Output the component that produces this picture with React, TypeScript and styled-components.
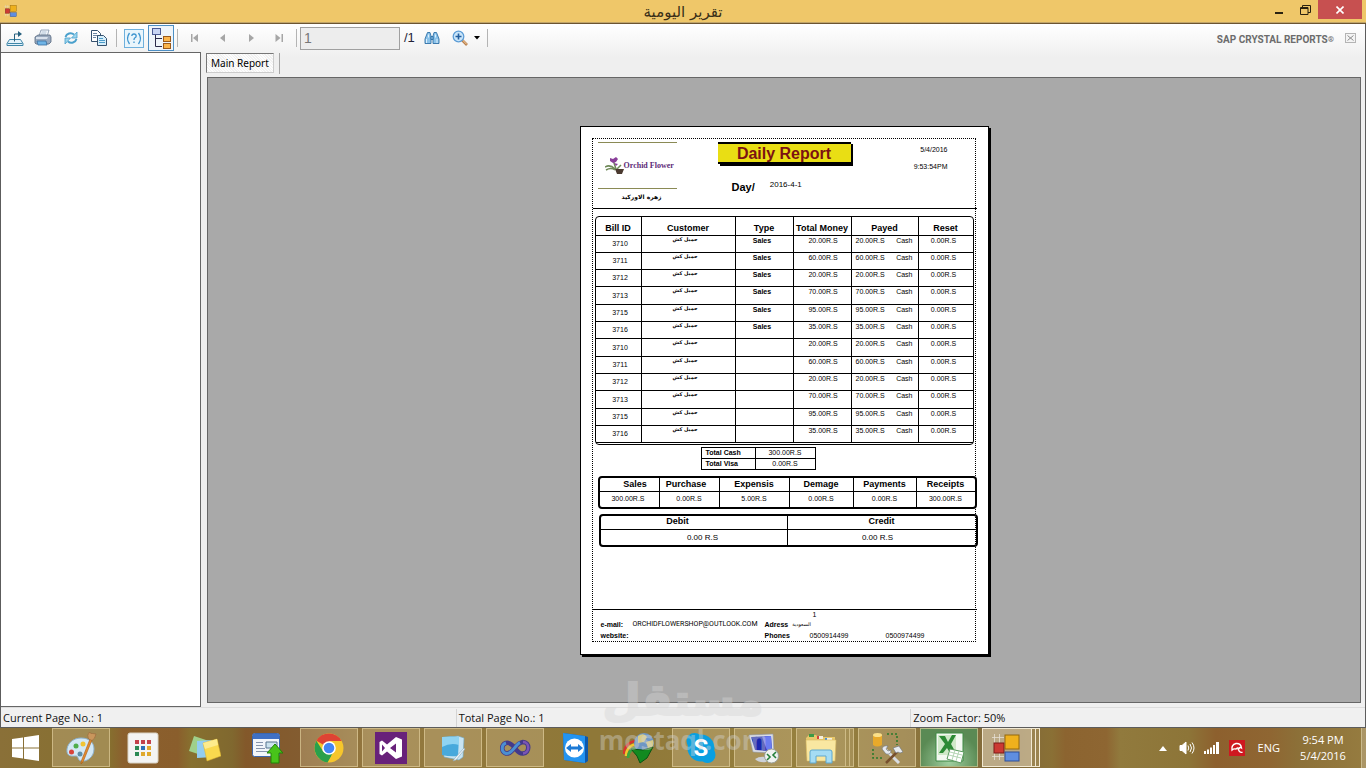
import React from 'react';
import styled, { createGlobalStyle, css } from 'styled-components';

const GlobalStyle = createGlobalStyle`
  * { box-sizing: border-box; }
  body { margin: 0; background: #f0f0f0; font-family: "Open Sans", "DejaVu Sans", sans-serif; }
  button { font: inherit; color: inherit; }
`;

const ui = '"Open Sans", "DejaVu Sans", sans-serif';
const arial = '"Liberation Sans", Arial, sans-serif';

/* ---------- window ---------- */

const Screen = styled.div`
  position: relative;
  display: flex;
  flex-direction: column;
  min-height: 100vh;
`;

const TitleBar = styled.header`
  display: flex;
  align-items: flex-start;
  height: 24px;
  padding: 0 4px;
  background: #efc769;
  border-bottom: 1px solid #6b5430;
  box-shadow: inset 0 -1px 0 #c0a468;
`;

const TitleSide = styled.div<{ $end?: boolean }>`
  flex: 1;
  display: flex;
  justify-content: ${(p) => (p.$end ? 'flex-end' : 'flex-start')};
`;

const AppIcon = styled.svg`
  width: 14px;
  height: 14px;
  margin-top: 4px;
`;

const Title = styled.h1`
  margin: 0;
  font: 400 15px/24px "DejaVu Sans", sans-serif;
  color: #3a2f18;
`;

const CaptionButton = styled.button<{ $close?: boolean }>`
  width: ${(p) => (p.$close ? 44 : 26)}px;
  height: 19px;
  padding: 0;
  border: 0;
  display: flex;
  align-items: center;
  justify-content: center;
  color: ${(p) => (p.$close ? '#fff' : '#2a2210')};
  background: ${(p) => (p.$close ? '#c75050' : 'transparent')};
`;

const WindowBody = styled.main`
  flex: 1;
  display: flex;
  flex-direction: column;
  border: solid #5c5c5c;
  border-width: 0 1px 1px 1px;
  background: linear-gradient(#fff, #efefef 34px);
`;

const Toolbar = styled.div`
  display: flex;
  align-items: center;
  height: 28px;
`;

const ToolButton = styled.button<{ $pressed?: boolean }>`
  width: ${(p) => (p.$pressed ? 26 : 28)}px;
  height: 26px;
  padding: 0;
  display: flex;
  align-items: center;
  justify-content: center;
  border: 1px solid ${(p) => (p.$pressed ? '#4d8fc4' : 'transparent')};
  background: ${(p) => (p.$pressed ? '#eef4fa' : 'transparent')};
`;

const Divider = styled.span`
  width: 1px;
  height: 18px;
  margin: 0 3px;
  background: #b4b4b4;
`;

const DropArrow = styled.svg`
  width: 7px;
  height: 4px;
  margin-right: 3px;
`;

const PageInput = styled.input`
  width: 100px;
  height: 23px;
  padding: 0 3px;
  border: 1px solid #a0a0a0;
  border-radius: 0;
  background: #ededed;
  color: #777;
  font: 14px/20px ${arial};
`;

const PageCount = styled.span`
  width: 18px;
  padding-left: 4px;
  font: 13px/20px ${arial};
  color: #222238;
`;

const Brand = styled.span`
  margin-left: auto;
  padding-top: 4px;
  font: 700 10px/14px Roboto, ${arial};
  color: #6c6c6c;
  white-space: nowrap;
`;

const Registered = styled.small`
  font-size: 8px;
  vertical-align: top;
`;

const PanelClose = styled.button`
  width: 11px;
  height: 10px;
  margin: 0 9px 0 11px;
  padding: 0;
  border: 1px solid #b4b4b4;
  background: #f4f4f4;
  display: flex;
  align-items: center;
  justify-content: center;
`;

const Workspace = styled.div`
  flex: 1;
  display: flex;
`;

const GroupTree = styled.aside`
  width: 200px;
  background: #fff;
  border: solid #666;
  border-width: 1px 1px 1px 0;
`;

const ReportArea = styled.section`
  flex: 1;
  display: flex;
  flex-direction: column;
  padding: 0 4px 4px 5px;
`;

const TabStrip = styled.div`
  display: flex;
  align-items: flex-start;
  height: 25px;
  padding-top: 1px;
`;

const Tab = styled.button`
  height: 20px;
  padding: 0 4px;
  border: 1px solid;
  border-color: #777 #ccc #ccc #777;
  background: repeating-linear-gradient(45deg, #fdfdfd 0 1px, #f1f1f1 1px 2px);
  font: 10px/16px "Noto Sans", sans-serif;
  color: #000;
`;

const TabEdge = styled.span`
  width: 1px;
  height: 21px;
  margin-left: 5px;
  background: #a5a5a5;
`;

const Viewer = styled.div`
  flex: 1;
  display: flex;
  align-items: center;
  justify-content: center;
  margin-left: 1px;
  padding: 24px;
  background: #a9a9a9;
  border: 1px solid #666;
`;

const StatusBar = styled.footer`
  display: grid;
  grid-template-columns: repeat(3, 1fr);
  height: 20px;
  padding-top: 1px;
  border-top: 1px solid #dcdcdc;
  background: #f0f0f0;
`;

const StatusCell = styled.span`
  padding-left: 2px;
  font: 11px/18px ${ui};
  color: #111;
  & + & {
    border-left: 1px solid #d4d4d4;
  }
`;

/* ---------- report paper ---------- */

const Paper = styled.article`
  width: 409px;
  height: 529px;
  padding: 11px 12px 12px 11px;
  background: #fff;
  border: 1px solid #000;
  box-shadow: 2px 2px 0 #000;
  font: 7px/9px ${arial};
  color: #000;
`;

const Margins = styled.div`
  display: flex;
  flex-direction: column;
  height: 100%;
  border: 1px dotted #000;
`;

const ReportHeader = styled.div`
  display: flex;
  align-items: flex-start;
  flex: none;
  height: 70px;
  margin-right: -2px;
  padding: 3px 29px 0 5px;
  border-bottom: 1px solid #000;
`;

const LogoBlock = styled.div`
  width: 79px;
  margin-right: 41px;
`;

const Logo = styled.div`
  display: flex;
  align-items: center;
  height: 47px;
  padding: 2px 0 0 7px;
  border: solid #8a8a55;
  border-width: 1px 0;
  font: 700 8px/10px "Liberation Serif", serif;
  color: #5d2a78;
  white-space: nowrap;
`;

const LogoCaption = styled.div`
  padding: 2px 0 0 9px;
  font: 700 6px/12px "DejaVu Sans", sans-serif;
  text-align: center;
`;

const ReportTitle = styled.h2`
  width: 133px;
  height: 22px;
  margin: 0 0 15px;
  border: solid #000;
  border-width: 2px 0;
  box-shadow: 2px 2px 0 #000;
  background: #e9de14;
  color: #7c1212;
  font: 700 16px/19px ${arial};
  text-align: center;
`;

const DayLine = styled.div`
  display: flex;
  align-items: flex-start;
  gap: 15px;
  padding-left: 14px;
  font-size: 8px;
  line-height: 12px;
`;

const DayLabel = styled.strong`
  font-size: 11px;
  line-height: 16px;
`;

const PrintStamp = styled.div`
  margin-left: auto;
  padding-top: 3px;
  display: grid;
  gap: 8px;
  text-align: right;
`;

const RoundedBox = styled.div<{ $heavy?: boolean; $left: number; $top: number }>`
  flex: none;
  width: 379px;
  margin: ${(p) => p.$top}px 0 0 ${(p) => p.$left}px;
  padding-bottom: ${(p) => (p.$heavy ? 0 : 1)}px;
  border: ${(p) => (p.$heavy ? 2 : 1)}px solid #000;
  border-radius: 4px;
`;

const Grid = styled.table`
  width: 100%;
  table-layout: fixed;
  border-collapse: separate;
  border-spacing: 0;
  text-align: center;
  white-space: nowrap;

  th, td {
    padding: 0;
    border-right: 1px solid #000;
    border-bottom: 1px solid #000;
  }
  th { font-size: 9px; line-height: 13px; }
  th:last-child, td:last-child { border-right: 0; }
`;

const BillGrid = styled(Grid)`
  thead th { height: 19px; padding-top: 5px; }
  tbody tr { height: 17px; }
  tbody tr:nth-child(3n + 4) { height: 18px; }
  tbody td { vertical-align: top; }
  tbody td:first-child { padding-left: 4px; vertical-align: middle; }
  tbody td:nth-child(3) { padding-right: 4px; }
  tbody td:nth-child(4) { padding-left: 2px; }
  tbody td:last-child { padding-right: 4px; }
`;

const SummaryGrid = styled(Grid)`
  thead th { height: 14px; }
  tbody td { height: 15px; padding-bottom: 2px; border-bottom: 0; }
`;

const PeriodGrid = styled(SummaryGrid)`
  thead th:first-child { padding-left: 12px; }
  thead th:nth-child(2) { padding-right: 6px; }
  tbody td:first-child { padding-right: 2px; }
`;

const BalanceGrid = styled(SummaryGrid)`
  th { line-height: 10px; vertical-align: top; }
  thead th:first-child { padding-right: 32px; }
  tbody td { padding: 0 8px 0 0; font-size: 8px; }
  tbody td:first-child { padding: 0 0 0 18px; }
`;

const TotalsGrid = styled(Grid)`
  flex: none;
  width: 115px;
  margin: 2px 0 0 108px;
  border: solid #000;
  border-width: 1px 1px 0;

  th, td { height: 11px; }
  th { font-size: 7px; line-height: 9px; text-align: left; padding-left: 4px; }
`;

const Customer = styled.span`
  display: block;
  padding-right: 6px;
  font: 700 5px/7px "DejaVu Sans", sans-serif;
`;

const Payment = styled.span`
  display: flex;
  justify-content: space-between;
  padding: 0 5px 0 4px;
`;

const ReportFooter = styled.div`
  display: grid;
  grid-template-columns: 164px 1fr;
  grid-template-rows: 9px auto;
  flex: none;
  height: 32px;
  margin: auto -2px 0 0;
  padding-left: 8px;
  border-top: 1px solid #000;
  white-space: nowrap;
`;

const PageNumber = styled.span`
  grid-column: 2;
  padding-left: 48px;
`;

const ContactLine = styled.div`
  display: flex;
  gap: 4px;
  line-height: 11px;
`;

const PhoneLine = styled.div`
  display: grid;
  grid-template-columns: 45px 76px 1fr;
  line-height: 11px;
`;

const EmailLabel = styled.strong`
  width: 28px;
`;

const Email = styled.span`
  font-family: Roboto, sans-serif;
`;

const ArabicText = styled.span`
  font-family: "DejaVu Sans", sans-serif;
  font-size: 5px;
`;

/* ---------- watermark ---------- */

const Watermark = styled.div`
  position: absolute;
  left: 50%;
  bottom: 14px;
  width: 172px;
  margin-left: -86px;
  z-index: 2;
  pointer-events: none;
  color: #d4d4d4;
  opacity: 0.4;
  text-align: center;
`;

const WatermarkArabic = styled.div`
  font: 700 44px/52px "DejaVu Sans", sans-serif;
  -webkit-text-stroke: 2px #d4d4d4;
  white-space: nowrap;
`;

const WatermarkLatin = styled.div`
  font: 700 26px/28px "Open Sans", sans-serif;
`;

/* ---------- taskbar ---------- */

const Taskbar = styled.nav`
  display: flex;
  align-items: stretch;
  height: 40px;
  background: linear-gradient(
    90deg,
    #8a7038 0, #86702f 8%, #8b602e 9%, #8a5e2c 13%, #87702f 14%, #80682f 17%,
    #83582a 18%, #835c30 22%, #93783f 27%, #8f7838 42%, #8f7838 45%, #97813f 60%,
    #80683a 74%, #8a7035 77%, #8c6430 78%, #8e6632 81%, #917a3d 82%, #8d7538 87%,
    #8d602e 89%, #8f6632 93%, #8c7038 95%, #967c40 100%
  );
`;

const StartButton = styled.button`
  width: 50px;
  margin-right: 2px;
  padding: 0;
  border: 0;
  background: none;
  display: flex;
  align-items: center;
  justify-content: center;
`;

const raised = css`
  border: 1px solid rgba(232, 214, 164, 0.6);
  background: rgba(205, 185, 140, 0.38);
`;

type Look = 'plain' | 'open' | 'green' | 'active';

const Task = styled.button<{ $look: Look; $stacked?: boolean }>`
  width: ${(p) => (p.$stacked ? 50 : 58)}px;
  height: 39px;
  margin-right: ${(p) => (p.$stacked ? 0 : 4)}px;
  padding: 0;
  border: 1px solid transparent;
  background: none;
  display: flex;
  align-items: center;
  justify-content: center;
  ${(p) => p.$look !== 'plain' && raised}
  ${(p) => p.$look === 'green' && css`background: radial-gradient(circle at 50% 90%, #9fcf9f, #5a8a54 70%);`}
  ${(p) => p.$look === 'active' && css`background: rgba(225, 212, 185, 0.6); border-color: #f2e9d2;`}
`;

const StackEdge = styled.span<{ $bright?: boolean }>`
  width: 4px;
  height: 39px;
  border: solid ${(p) => (p.$bright ? '#f2e9d2' : 'rgba(232, 214, 164, 0.6)')};
  border-width: 1px 1px 1px 0;
  background: rgba(205, 185, 140, 0.3);
  & + button { margin-left: 4px; }
`;

const Tray = styled.div`
  display: flex;
  align-items: center;
  gap: 9px;
  margin-left: auto;
  color: #fff;
  font: 11px/16px ${ui};
`;

const TrayButton = styled.button`
  padding: 0;
  border: 0;
  background: none;
  display: flex;
  &:first-child { margin-right: 3px; }
`;

const Language = styled.span`
  margin-left: 4px;
`;

const Clock = styled.time`
  width: 76px;
  margin-left: -4px;
  text-align: center;
`;

const ShowDesktop = styled.button`
  width: 5px;
  margin-left: -9px;
  align-self: stretch;
  height: 40px;
  padding: 0;
  border: 0;
  border-left: 1px solid #c9b98c;
  background: rgba(255, 255, 255, 0.2);
`;

/* ---------- toolbar drawings ---------- */

const ExportIcon = () => (
  <svg width="18" height="18" viewBox="0 0 18 18" fill="none" stroke="#3f86a8">
    <path d="M3.500 10.500h11l2.500 4v2h-16v-2z" fill="#e4f2fa" />
    <path d="M1.500 14.500h15" />
    <path d="M8.500 12.500V5h4" stroke="#27607e" />
    <path d="M12 2l4 3-4 3z" fill="#27607e" stroke="none" />
  </svg>
);

const PrintIcon = () => (
  <svg width="18" height="18" viewBox="0 0 18 18">
    <path d="M5 7l2-6h8l-2 7z" fill="#f4f8fc" stroke="#8092a8" strokeWidth=".8" />
    <path d="M7.500 3h5M7 5h5" stroke="#9fb4cc" strokeWidth=".8" />
    <path d="M1 8l3-2h12l1 2v5l-2 2H2l-1-1z" fill="#9aaabf" stroke="#56677f" strokeWidth=".8" />
    <path d="M2 8h12l-1 2H2z" fill="#d8e1ec" />
    <path d="M3 12h9l1 4H4z" fill="#6fb4e6" stroke="#3a6fa0" strokeWidth=".8" />
  </svg>
);

const RefreshIcon = () => (
  <svg width="16" height="16" viewBox="0 0 16 16" fill="none" stroke="#4aa0cc" strokeWidth="2">
    <path d="M2.500 7C3.500 3.500 8 2 11 4.500" />
    <path d="M13.500 9C12.500 12.500 8 14 5 11.500" />
    <path d="M14 2v6H8.500z M2 14V8h5.500z" fill="#9ad6ee" stroke="#4aa0cc" strokeWidth=".8" />
  </svg>
);

const CopyIcon = () => (
  <svg width="18" height="18" viewBox="0 0 18 18" stroke="#35516e">
    <path d="M1.500 1.500h6l3 3v8h-9z" fill="#fff" />
    <path d="M3 4.500h4M3 6.500h5M3 8.500h3" stroke="#6d87a3" />
    <path d="M7.500 6.500h6l3 3v7h-9z" fill="#d6eefa" />
    <path d="M9 9.500h4M9 11.500h6M9 13.500h6" stroke="#4c9bc9" />
  </svg>
);

const HelpIcon = () => (
  <svg width="20" height="19" viewBox="0 0 20 19">
    <rect x=".5" y=".5" width="19" height="18" fill="#e9f5fc" stroke="#6fb0dc" />
    <g fill="none" stroke="#3d94cf" strokeWidth="1.300">
      <path d="M5.500 4Q1.500 9.500 5.500 15M14.500 4q4 5.500 0 11" />
      <path d="M7.800 7q.2-2 2.200-2t2.200 2q0 1.300-1.500 2-.7.500-.7 2M10 12.500V14" />
    </g>
  </svg>
);

const TreeIcon = () => (
  <svg width="22" height="23" viewBox="0 0 22 23">
    <path d="M5.500 8v11.500H12M5.500 11.500H12" fill="none" stroke="#2a2a4a" />
    <rect x="2.500" y="1.500" width="8" height="6" fill="#c7d4f4" stroke="#4a5a94" />
    <rect x="13.500" y="9.500" width="7" height="5" fill="#fbb54c" stroke="#9a5a1c" />
    <rect x="13.500" y="16.500" width="7" height="5" fill="#fbb54c" stroke="#9a5a1c" />
  </svg>
);

const NavIcon = ({ d }: { d: string }) => (
  <svg width="10" height="10" viewBox="0 0 10 10" fill="#a6a6a6"><path d={d} /></svg>
);

const FindIcon = () => (
  <svg width="16" height="14" viewBox="0 0 16 14" fill="#8cc3ea" stroke="#2f6fa6" strokeWidth=".9">
    <path d="M3.500 1.500h2.500l1 3.500v7.500H1V8z" />
    <path d="M12.500 1.500H10L9 5v7.500h6V8z" />
    <path d="M7 5.500h2v3H7z" />
    <path d="M2.500 8v4M13 8v4M4.500 3.500v3M11.500 3.500v3" stroke="#e6f5ff" />
  </svg>
);

const ZoomIcon = () => (
  <svg width="16" height="16" viewBox="0 0 16 16" fill="none">
    <path d="M10 10l5 5" stroke="#b9814f" strokeWidth="2.600" />
    <path d="M10.500 10l4.200 4.300" stroke="#f7d0a0" />
    <circle cx="6.500" cy="6.500" r="5.300" fill="#cbe6fa" stroke="#5d9dd6" strokeWidth="1.300" />
    <path d="M3.500 6.500h6M6.500 3.500v6" stroke="#245f9e" strokeWidth="1.600" />
  </svg>
);

/* ---------- taskbar drawings ---------- */

const Ico = ({ children }: { children: React.ReactNode }) => (
  <svg width="32" height="32" viewBox="0 0 32 32" aria-hidden="true">{children}</svg>
);

const WindowsIcon = () => (
  <svg width="27" height="26" viewBox="0 0 27 26" fill="#fff">
    <path d="M0 4l11-1.600V12.500H0zM12 2.200L27 0v12.500H12zM0 13.500h11v10.100L0 22zM12 13.500h15V26l-15-2.200z" />
  </svg>
);

const PaintIcon = () => (
  <Ico>
    <path d="M2 20C1 12 8 6 16 6c9 0 13 5 13 11 0 8-7 13-13 12-4-1-2-5-5-5-3 0-8 1-9-4z" fill="#d3e8f5" stroke="#8db2cf" />
    <circle cx="6.500" cy="20" r="2.500" fill="#d8433b" /><circle cx="11" cy="14" r="2.500" fill="#4fae4c" />
    <circle cx="18" cy="12" r="2.500" fill="#f1c433" /><circle cx="15" cy="22" r="2.500" fill="#5f8ea6" />
    <path d="M27 8L18 30l-2 2 .5-3.500L25 7z" fill="#e58a2c" stroke="#a65c18" strokeWidth=".6" />
    <path d="M23.500 7q-2-4 1-7 1 2 3 1.500L31 2q-1 5-4 6.500z" fill="#c9965c" stroke="#97673a" strokeWidth=".6" />
  </Ico>
);

const dots = ['#c2414b', '#c2414b', '#c2414b', '#2c8a55', '#2c6fb8', '#e0a92e', '#2c8a55', '#e0a92e', '#e0a92e'];
const AppsIcon = () => (
  <Ico>
    <rect x="1" y="1" width="30" height="30" rx="2" fill="#f4f4f4" stroke="#d9d2c4" />
    {dots.map((c, i) => (
      <rect key={i} x={8 + (i % 3) * 6} y={8 + Math.floor(i / 3) * 6} width="4" height="4" fill={c} />
    ))}
  </Ico>
);

const NotesIcon = () => (
  <Ico>
    <path d="M5 4l15 5-5 15L0 19z" fill="#9fd08a" />
    <path d="M8 9l15-1 1 17-16 1z" fill="#93cdf0" />
    <path d="M14 11l14-4 4 17-14 5z" fill="#f9d94e" stroke="#d9b12e" strokeWidth=".5" />
    <path d="M14 11l14-4 1 6-13 4z" fill="#fdeb8c" />
  </Ico>
);

const UploadIcon = () => (
  <Ico>
    <rect x="1.500" y="1.500" width="27" height="23" rx="2" fill="#f3f6fa" stroke="#3c66ad" />
    <path d="M2 2h26v5H2z" fill="#3f70c4" />
    <path d="M5 10.500h7M5 13.500h7M5 16.500h9M5 19.500h12" stroke="#8795ad" />
    <path d="M15 10h11v6H15z" fill="#cde3ee" stroke="#56758e" />
    <path d="M24 12l8 9h-4v10h-8V21h-4z" fill="#48c41a" stroke="#238208" />
  </Ico>
);

const ChromeIcon = () => (
  <Ico>
    <circle cx="16" cy="16" r="14.500" fill="#f6c62c" />
    <path d="M16 16L3.400 8.800A14.500 14.500 0 0 1 28.600 9z" fill="#de4334" />
    <path d="M3.400 8.800L10.500 20 16 16l4 5-5.500 9.400A14.500 14.500 0 0 1 3.400 8.800z" fill="#2aa04c" />
    <path d="M16 9h12.600L22 20l-6 10 4-10z" fill="#f6c62c" />
    <circle cx="16" cy="16" r="6.800" fill="#fff" /><circle cx="16" cy="16" r="5.300" fill="#4285f4" />
  </Ico>
);

const VisualStudioIcon = () => (
  <Ico>
    <path d="M0 0h32v32H0z" fill="#68217a" />
    <path fillRule="evenodd" d="M21 5l6 2.500v17L21 27l-9-7.500L7 23.500 4.500 22V10L7 8.500l5 4zM21 11.500L15 16l6 4.500zM7 12.500v7l3-3.500z" fill="#fff" />
  </Ico>
);

const NotebookIcon = () => (
  <Ico>
    <path d="M6 6l15-2 6 2-1 19-4 3-15-3z" fill="#c8e4f3" stroke="#6fa9c8" strokeWidth=".6" />
    <path d="M5 5q8-1 17 0l-1 19q-8 1-16-1z" fill="#48a9dc" />
    <path d="M5 5q8-1 17 0v8q-8-3-17 2z" fill="#8fd3f2" />
    <path d="M28 17l-9 11-3 1 2-3 9-10z" fill="#eef6fa" stroke="#8aa4b4" strokeWidth=".6" />
  </Ico>
);

const InfinityIcon = () => (
  <Ico>
    <path d="M16 16C12 11 9 10.500 7 11c-5 1.500-5 9 0 10.500 7 1 9-10.500 17-11.500 7 0 7 11 0 11.500-4 .5-6-3-8-5.500z" fill="none" stroke="#443a8a" strokeWidth="4.500" />
    <path d="M7 11c-5 1.500-5 9 0 10.500 6 1 9-8.500 14-10.800" fill="none" stroke="#4b8fd1" strokeWidth="3" />
    <path d="M24 10c7 0 7 11 0 11.500" fill="none" stroke="#7b55b5" strokeWidth="2.500" />
  </Ico>
);

const TeamViewerIcon = () => (
  <Ico>
    <path d="M2 1l22 3 3 1v24l-3 2-21-3z" fill="#0d58ac" /><path d="M2 1l22 3v27L3 28z" fill="#2494f0" />
    <circle cx="13.500" cy="16" r="9.500" fill="#fff" />
    <path d="M5 16l5-4v2.500h7V12l5 4-5 4v-2.500h-7V20z" fill="#1c7ad6" />
  </Ico>
);

const DownloadIcon = () => (
  <Ico>
    <g fill="none" strokeWidth="2.500">
      <path d="M1 22C1 14 7 9 14 9" stroke="#d8342c" /><path d="M3 24c0-7 5-12 12-12" stroke="#f1c52e" />
      <path d="M5 26c0-6 4-10 11-11" stroke="#3ba53f" />
    </g>
    <circle cx="21" cy="11" r="10" fill="#6f97c4" />
    <path d="M15 4q6-4 9 1l-3 5-6 1zM23 10l7-2q2 6-4 11z" fill="#d8cc86" />
    <path d="M8 17l12 1 10-3-6 11-7 5-3-7z" fill="#128a20" stroke="#0a5414" />
  </Ico>
);

const SkypeLetter = styled.span`
  position: absolute;
  inset: 0;
  font: 700 24px/32px Roboto, sans-serif;
  color: #fff;
  text-align: center;
`;
const SkypeBadge = styled.span`
  position: relative;
  display: flex;
`;
const SkypeIcon = () => (
  <SkypeBadge>
    <Ico>
      <circle cx="16" cy="16" r="13.500" fill="#0a9fe0" /><circle cx="9.500" cy="9" r="8" fill="#0a9fe0" />
      <circle cx="22.500" cy="23" r="8" fill="#0a9fe0" />
    </Ico>
    <SkypeLetter>S</SkypeLetter>
  </SkypeBadge>
);

const RemoteIcon = () => (
  <Ico>
    <path d="M2 3l24-1 1 19L6 20z" fill="#dcdfe6" stroke="#8f97a8" strokeWidth=".6" />
    <path d="M4 5l20-1 1 15-17-1z" fill="#1926b0" /><path d="M15 4.500L24 4l1 15-5-.3z" fill="#6b7cf0" />
    <path d="M8 27q6-4 14-1l-3 4q-7 1-11-3z" fill="#cdd1d8" />
    <circle cx="24.500" cy="24" r="7" fill="#f0f2f0" stroke="#9aa09a" />
    <path d="M20 22l3 3-3 3M29 20l-3 3 3 3" fill="none" stroke="#25803a" strokeWidth="1.600" />
  </Ico>
);

const FolderIcon = () => (
  <Ico>
    <path d="M1 6l3-3h7l2 2h17v22H2z" fill="#e8c86b" />
    <path d="M4 2h5v3H4z" fill="#3c9a46" /><path d="M12 4h6v3h-6z" fill="#f4efe0" /><path d="M12 4h2v3h-2z" fill="#d8453a" />
    <path d="M20 6h7v3h-7z" fill="#f4efe0" /><path d="M20 6h2v3h-2z" fill="#4a8dd0" />
    <path d="M1 8h30l-1 21H2z" fill="#f9e7a1" stroke="#d8b962" strokeWidth=".6" />
    <path d="M5 31V20q0-2 2-2h18q2 0 2 2v11h-6v-7H11v7z" fill="#a5dcf4" stroke="#5ea8cf" />
  </Ico>
);

const ToolsIcon = () => (
  <Ico>
    <path d="M2 3v10q4 3 9 0V3z" fill="#e8a92a" /><ellipse cx="6.500" cy="3" rx="4.500" ry="2" fill="#fbe089" />
    <path d="M16 2h10v11M2 17v9h9" fill="none" stroke="#2c7a2c" strokeWidth="1.600" strokeDasharray="2 2" />
    <path d="M14 17l14 14" stroke="#d9dde2" strokeWidth="3" /><path d="M26 20L15 31" stroke="#77502e" strokeWidth="2.500" />
    <path d="M11 17q1-4 6-3l-2 3 2 2 3-1q0 5-5 4zM22 16l6-2 4 6-3 1-2-1-2 1z" fill="#e7eaee" stroke="#68707a" strokeWidth=".6" />
  </Ico>
);

const ExcelIcon = () => (
  <Ico>
    <path d="M3 1h27v28H3z" fill="#f3f8f1" stroke="#3f8a45" />
    <path d="M5 3h18v20H5z" fill="#cfe8c8" />
    <path d="M6 4h6l3 6 4-7h4l-5 9 5 9h-6l-3-5-4 5H6l6-9z" fill="#2c8a35" />
    <path d="M17 17l14 3-3 11-14-4z" fill="#fff" stroke="#5a9a5e" />
    <path d="M17 20l12 3M16 23l12 3M22 18l-3 10M26 19l-3 10" stroke="#a3cba3" strokeWidth=".8" />
  </Ico>
);

const FormsShapes = () => (
  <>
    <path d="M3.500 2v26M8.500 2v26M1 5.500h12M1 24.500h12" stroke="#e6e0d4" strokeWidth=".8" />
    <rect x="3" y="11" width="10" height="10" fill="#cc3a33" stroke="#7c1a18" />
    <rect x="14" y="3" width="14" height="14" fill="#efb11d" stroke="#94680c" />
    <rect x="14" y="20" width="14" height="9" fill="#5f8ee0" stroke="#2f4f96" />
  </>
);
const FormsIcon = () => <Ico><FormsShapes /></Ico>;

/* ---------- data ---------- */

const bills: [string, string][] = [
  ['3710', '20.00R.S'], ['3711', '60.00R.S'], ['3712', '20.00R.S'],
  ['3713', '70.00R.S'], ['3715', '95.00R.S'], ['3716', '35.00R.S'],
];
const rows = [...bills.map((b) => [...b, 'Sales']), ...bills.map((b) => [...b, ''])];

const summary = [
  ['Sales', '300.00R.S'], ['Purchase', '0.00R.S'], ['Expensis', '5.00R.S'],
  ['Demage', '0.00R.S'], ['Payments', '0.00R.S'], ['Receipts', '300.00R.S'],
];

const tasks: { name: string; icon: React.ReactNode; look: Look; stacked?: boolean }[] = [
  { name: 'Paint', icon: <PaintIcon />, look: 'open' },
  { name: 'App launcher', icon: <AppsIcon />, look: 'plain' },
  { name: 'Sticky Notes', icon: <NotesIcon />, look: 'plain' },
  { name: 'Uploader', icon: <UploadIcon />, look: 'plain' },
  { name: 'Chrome', icon: <ChromeIcon />, look: 'open' },
  { name: 'Visual Studio', icon: <VisualStudioIcon />, look: 'open' },
  { name: 'Notebook', icon: <NotebookIcon />, look: 'open' },
  { name: 'Visual Studio 2010', icon: <InfinityIcon />, look: 'open' },
  { name: 'TeamViewer', icon: <TeamViewerIcon />, look: 'plain' },
  { name: 'Download Manager', icon: <DownloadIcon />, look: 'plain' },
  { name: 'Skype', icon: <SkypeIcon />, look: 'open' },
  { name: 'Remote Desktop', icon: <RemoteIcon />, look: 'open' },
  { name: 'File Explorer', icon: <FolderIcon />, look: 'open', stacked: true },
  { name: 'SQL tools', icon: <ToolsIcon />, look: 'open' },
  { name: 'Excel', icon: <ExcelIcon />, look: 'green' },
  { name: 'Report viewer', icon: <FormsIcon />, look: 'active', stacked: true },
];

const Cols = ({ widths }: { widths: number[] }) => (
  <colgroup>{widths.map((w, i) => <col key={i} width={w} />)}</colgroup>
);

function Report() {
  return (
    <Paper>
      <Margins>
        <ReportHeader>
          <LogoBlock>
            <Logo>
              <svg width="19" height="18" viewBox="0 0 19 18">
                <path d="M0 10q5-3 10 2M1 13q5-3 9 0M11 12L8 3M12 12l4-4" fill="none" stroke="#6f8a58" strokeWidth="1.500" />
                <path d="M5 1l3 1 3-2 2 2-2 3-3 1-3-2zM9 6l4 1-2 2z" fill="#8a3f9a" />
                <path d="M10 12h9l-2 5h-5z" fill="#4b3a30" />
              </svg>
              Orchid Flower
            </Logo>
            <LogoCaption dir="rtl">زهرة الاوركيد</LogoCaption>
          </LogoBlock>
          <div>
            <ReportTitle>Daily Report</ReportTitle>
            <DayLine><DayLabel>Day/</DayLabel><span>2016-4-1</span></DayLine>
          </div>
          <PrintStamp><span>5/4/2016</span><span>9:53:54PM</span></PrintStamp>
        </ReportHeader>

        <RoundedBox $left={2} $top={7}>
          <BillGrid>
            <Cols widths={[46, 94, 58, 58, 67, 54]} />
            <thead>
              <tr><th>Bill ID</th><th>Customer</th><th>Type</th><th>Total Money</th><th>Payed</th><th>Reset</th></tr>
            </thead>
            <tbody>
              {rows.map(([id, money, type], i) => (
                <tr key={i}>
                  <td>{id}</td>
                  <td><Customer dir="rtl">حميل كش</Customer></td>
                  <td><strong>{type}</strong></td>
                  <td>{money}</td>
                  <td><Payment><span>{money}</span><span>Cash</span></Payment></td>
                  <td>0.00R.S</td>
                </tr>
              ))}
            </tbody>
          </BillGrid>
        </RoundedBox>

        <TotalsGrid>
          <Cols widths={[54, 59]} />
          <tbody>
            <tr><th>Total Cash</th><td>300.00R.S</td></tr>
            <tr><th>Total Visa</th><td>0.00R.S</td></tr>
          </tbody>
        </TotalsGrid>

        <RoundedBox $heavy $left={5} $top={6}>
          <PeriodGrid>
            <Cols widths={[60, 60, 70, 64, 63, 58]} />
            <thead><tr>{summary.map(([h]) => <th key={h}>{h}</th>)}</tr></thead>
            <tbody><tr>{summary.map(([h, v]) => <td key={h}>{v}</td>)}</tr></tbody>
          </PeriodGrid>
        </RoundedBox>

        <RoundedBox $heavy $left={6} $top={5}>
          <BalanceGrid>
            <Cols widths={[187, 188]} />
            <thead><tr><th>Debit</th><th>Credit</th></tr></thead>
            <tbody><tr><td>0.00 R.S</td><td>0.00 R.S</td></tr></tbody>
          </BalanceGrid>
        </RoundedBox>

        <ReportFooter>
          <PageNumber>1</PageNumber>
          <ContactLine>
            <EmailLabel>e-mail:</EmailLabel><Email>ORCHIDFLOWERSHOP@OUTLOOK.COM</Email>
          </ContactLine>
          <ContactLine>
            <strong>Adress</strong><ArabicText dir="rtl">السعودية</ArabicText>
          </ContactLine>
          <ContactLine><strong>website:</strong></ContactLine>
          <PhoneLine>
            <strong>Phones</strong><span>0500914499</span><span>0500974499</span>
          </PhoneLine>
        </ReportFooter>
      </Margins>
    </Paper>
  );
}

export default function App() {
  return (
    <Screen>
      <GlobalStyle />
      <TitleBar>
        <TitleSide>
          <AppIcon viewBox="0 0 32 32"><FormsShapes /></AppIcon>
        </TitleSide>
        <Title dir="rtl">تقرير اليومية</Title>
        <TitleSide $end>
          <CaptionButton aria-label="Minimize">
            <svg width="8" height="12" viewBox="0 0 8 12"><path d="M0 8h8v2H0z" fill="currentColor" /></svg>
          </CaptionButton>
          <CaptionButton aria-label="Restore">
            <svg width="11" height="10" viewBox="0 0 11 10" fill="none" stroke="currentColor">
              <path d="M.5 2.500h7.500v7H.5zM.5 3.500h7.500M2.500 2.500V.5h8v7H8" />
            </svg>
          </CaptionButton>
          <CaptionButton $close aria-label="Close">
            <svg width="8" height="8" viewBox="0 0 8 8" stroke="currentColor" strokeWidth="1.600"><path d="M.5.5l7 7M7.500.5l-7 7" /></svg>
          </CaptionButton>
        </TitleSide>
      </TitleBar>

      <WindowBody>
        <Toolbar>
          <ToolButton aria-label="Export"><ExportIcon /></ToolButton>
          <ToolButton aria-label="Print"><PrintIcon /></ToolButton>
          <ToolButton aria-label="Refresh"><RefreshIcon /></ToolButton>
          <ToolButton aria-label="Copy"><CopyIcon /></ToolButton>
          <Divider />
          <ToolButton aria-label="Help"><HelpIcon /></ToolButton>
          <ToolButton $pressed aria-label="Group tree"><TreeIcon /></ToolButton>
          <Divider />
          <ToolButton aria-label="First page"><NavIcon d="M1 1h1.500v8H1zM8 1v8L3 5z" /></ToolButton>
          <ToolButton aria-label="Previous page"><NavIcon d="M7 1v8L2 5z" /></ToolButton>
          <ToolButton aria-label="Next page"><NavIcon d="M3 1v8l5-4z" /></ToolButton>
          <ToolButton aria-label="Last page"><NavIcon d="M1.500 1v8l5-4zM7.500 1H9v8H7.500z" /></ToolButton>
          <Divider />
          <PageInput aria-label="Page number" defaultValue="1" disabled />
          <PageCount>/1</PageCount>
          <ToolButton aria-label="Find"><FindIcon /></ToolButton>
          <ToolButton aria-label="Zoom"><ZoomIcon /></ToolButton>
          <DropArrow viewBox="0 0 7 4"><path d="M0 0h6L3 3.500z" /></DropArrow>
          <Divider />
          <Brand>SAP CRYSTAL REPORTS<Registered>®</Registered></Brand>
          <PanelClose aria-label="Close panel">
            <svg width="7" height="6" viewBox="0 0 7 6" stroke="#8c8c8c"><path d="M.5.5l6 5M6.500.5l-6 5" /></svg>
          </PanelClose>
        </Toolbar>

        <Workspace>
          <GroupTree />
          <ReportArea>
            <TabStrip><Tab>Main Report</Tab><TabEdge /></TabStrip>
            <Viewer><Report /></Viewer>
          </ReportArea>
        </Workspace>

        <StatusBar>
          <StatusCell>Current Page No.: 1</StatusCell>
          <StatusCell>Total Page No.: 1</StatusCell>
          <StatusCell>Zoom Factor: 50%</StatusCell>
        </StatusBar>
      </WindowBody>

      <Taskbar>
        <StartButton aria-label="Start"><WindowsIcon /></StartButton>
        {tasks.map((t) => (
          <React.Fragment key={t.name}>
            <Task $look={t.look} $stacked={t.stacked} aria-label={t.name}>{t.icon}</Task>
            {t.stacked && (
              <>
                <StackEdge $bright={t.look === 'active'} />
                <StackEdge $bright={t.look === 'active'} />
              </>
            )}
          </React.Fragment>
        ))}
        <Tray>
          <TrayButton aria-label="Show hidden icons">
            <svg width="8" height="5" viewBox="0 0 8 5" fill="#fff"><path d="M4 0l4 5H0z" /></svg>
          </TrayButton>
          <TrayButton aria-label="Volume">
            <svg width="16" height="14" viewBox="0 0 16 14" fill="none" stroke="#fff">
              <path d="M1 4.500h2L7 1v12L3 9.500H1z" fill="#fff" /><path d="M9 4.500q1.500 2.500 0 5M11 3q3 4 0 8M13 1.500q4 5.500 0 11" />
            </svg>
          </TrayButton>
          <TrayButton aria-label="Network">
            <svg width="16" height="12" viewBox="0 0 16 12" fill="#fff">
              <path d="M0 9h2v3H0zM3 7.500h2V12H3zM6 5.500h2V12H6zM9 3h2v9H9zM12 0h3v12h-3z" />
            </svg>
          </TrayButton>
          <TrayButton aria-label="Antivirus">
            <svg width="16" height="16" viewBox="0 0 16 16" fill="none" stroke="#fff" strokeWidth="1.400">
              <path d="M0 0h16v16H0z" fill="#cf1820" stroke="none" />
              <path d="M3 10q-1-5 4-6.500Q12 3 12.500 8q-1.500-1-2.500.5-1.500-1.500-3 .5Q4.500 8.500 3 10zM8.500 8l2 3.500q1.500 1.500 3 .5" />
            </svg>
          </TrayButton>
          <Language>ENG</Language>
          <Clock>9:54 PM<br />5/4/2016</Clock>
          <ShowDesktop aria-label="Show desktop" />
        </Tray>
      </Taskbar>

      <Watermark aria-hidden="true">
        <WatermarkArabic dir="rtl">مستقل</WatermarkArabic>
        <WatermarkLatin>mostaql.com</WatermarkLatin>
      </Watermark>
    </Screen>
  );
}
